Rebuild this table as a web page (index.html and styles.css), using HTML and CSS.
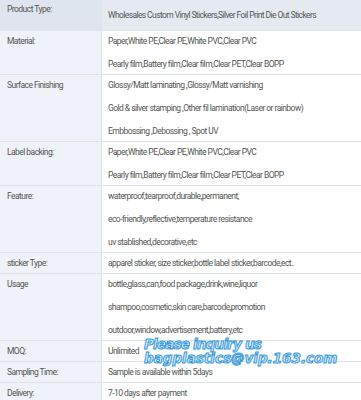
FILE: index.html
```html
<!DOCTYPE html>
<html>
<head>
<meta charset="utf-8">
<link rel="stylesheet" href="styles.css">
</head>
<body>
<div class="spec">
  <div class="row head">
    <div class="label">Product Type:</div>
    <div class="value"><p>Wholesales Custom Vinyl Stickers,Silver Foil Print Die Out Stickers</p></div>
  </div>
  <div class="row">
    <div class="label">Material:</div>
    <div class="value"><p>Paper,White PE,Clear PE,White PVC,Clear PVC</p><p>Pearly film,Battery film,Clear film,Clear PET,Clear BOPP</p></div>
  </div>
  <div class="row">
    <div class="label">Surface Finishing</div>
    <div class="value"><p>Glossy/Matt laminating ,Glossy/Matt varnishing</p><p>Gold &amp; silver stamping ,Other fil lamination(Laser or rainbow)</p><p>Embbossing ,Debossing , Spot UV</p></div>
  </div>
  <div class="row">
    <div class="label">Label backing:</div>
    <div class="value"><p>Paper,White PE,Clear PE,White PVC,Clear PVC</p><p>Pearly film,Battery film,Clear film,Clear PET,Clear BOPP</p></div>
  </div>
  <div class="row">
    <div class="label">Feature:</div>
    <div class="value"><p>waterproof,tearproof,durable,permanent,</p><p>eco-friendly,reflective,temperature resistance</p><p>uv stablished,decorative,etc</p></div>
  </div>
  <div class="row">
    <div class="label">sticker Type:</div>
    <div class="value"><p>apparel sticker, size sticker,bottle label sticker,barcode,ect..</p></div>
  </div>
  <div class="row">
    <div class="label">Usage</div>
    <div class="value"><p>bottle,glass,can,food package,drink,wine,liquor</p><p>shampoo,cosmetic,skin care,barcode,promotion</p><p>outdoor,window,advertisement,battery,etc</p></div>
  </div>
  <div class="row">
    <div class="label">MOQ:</div>
    <div class="value"><p>Unlimited</p></div>
  </div>
  <div class="row">
    <div class="label">Sampling Time:</div>
    <div class="value"><p>Sample is available within 5days</p></div>
  </div>
  <div class="row">
    <div class="label">Delivery:</div>
    <div class="value"><p>7-10 days after payment</p></div>
  </div>
  <div class="watermark"><span class="wm1">Please inquiry us</span><span>bagplastics@vip.163.com</span></div>
</div>
</body>
</html>
```
FILE: styles.css
```css
html, body {
  margin: 0;
  padding: 0;
  background: #ffffff;
}
.spec {
  position: relative;
  width: 361px;
  font-family: Roboto, "Liberation Sans", sans-serif;
  font-size: 8.5px;
  letter-spacing: -0.55px;
  color: #555555;
}
.row {
  display: grid;
  grid-template-columns: 102px 1fr;
  border-bottom: 1px solid #dfe3ea;
}
.label {
  background: #eff2f8;
  border-right: 1px solid #dfe3ea;
  padding: 0 7px;
  line-height: 20px;
}
.value {
  display: flex;
  flex-direction: column;
  gap: 3px;
  padding: 0 6px;
  line-height: 20px;
  white-space: nowrap;
}
.value p {
  margin: 0;
}
.head .label {
  background: #dfe5ee;
  line-height: 18px;
}
.head .value {
  background: #e5eaf1;
  padding-top: 5px;
  padding-bottom: 5px;
  letter-spacing: -0.6px;
}
.watermark {
  position: absolute;
  left: 144px;
  top: 337px;
  display: flex;
  flex-direction: column;
  font-family: "DejaVu Sans", sans-serif;
  font-weight: bold;
  font-style: italic;
  font-size: 13.5px;
  line-height: 14px;
  color: #d3ecfb;
  -webkit-text-stroke: 1px #3a9ad8;
  letter-spacing: 0;
}
.watermark .wm1 {
  letter-spacing: -0.8px;
}
```
